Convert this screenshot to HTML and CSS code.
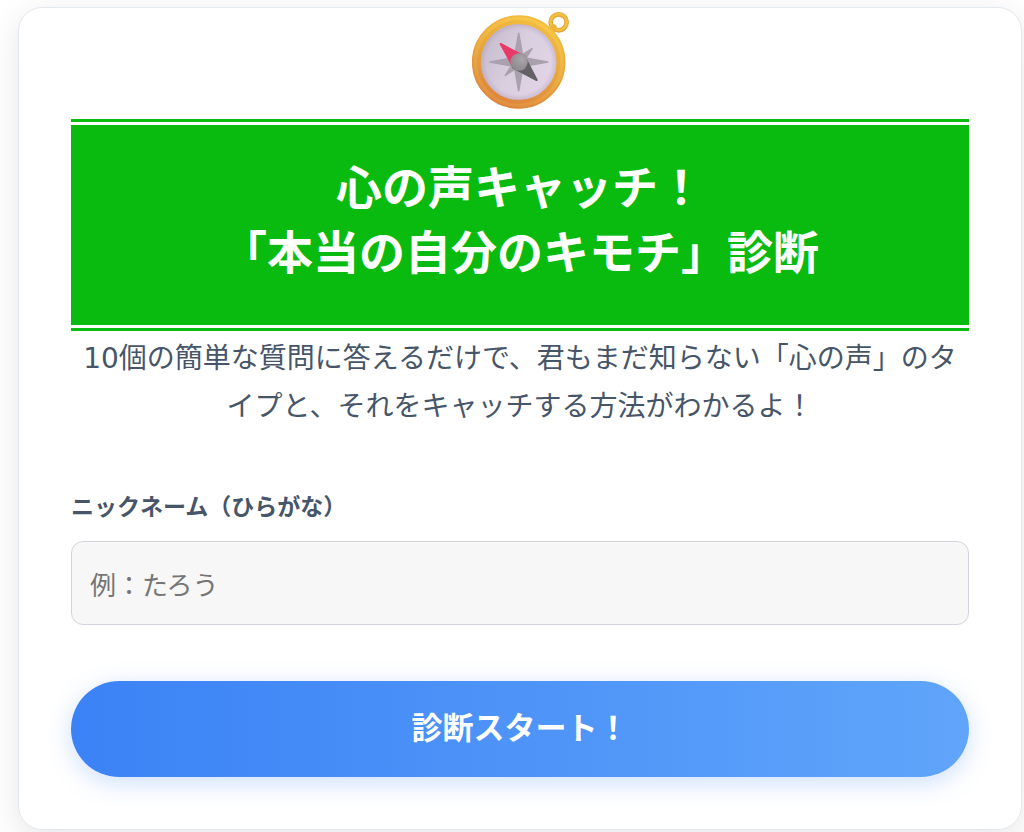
FILE: index.html
```html
<!DOCTYPE html>
<html lang="ja">
<head>
  <meta charset="UTF-8">
  <meta name="viewport" content="width=device-width, initial-scale=1.0">
  <title>心の声キャッチ！「本当の自分のキモチ」診断</title>
  <link rel="stylesheet" href="styles.css">
</head>
<body>
  <main class="card">
    <svg class="compass" viewBox="35 35 291 291" role="img" aria-label="コンパス">
      <defs>
        <linearGradient id="gold" x1="0.7" y1="0" x2="0.3" y2="1">
          <stop offset="0" stop-color="#f3bd3e"/>
          <stop offset="0.5" stop-color="#e6a53c"/>
          <stop offset="1" stop-color="#dc8440"/>
        </linearGradient>
        <linearGradient id="shine" x1="0.7" y1="0" x2="0.3" y2="1">
          <stop offset="0" stop-color="#fbcf4e"/>
          <stop offset="1" stop-color="#e5983e"/>
        </linearGradient>
        <linearGradient id="face" x1="0" y1="0.2" x2="1" y2="0.7">
          <stop offset="0" stop-color="#c3b8ca"/>
          <stop offset="0.5" stop-color="#d9cfdf"/>
          <stop offset="1" stop-color="#e3d5e8"/>
        </linearGradient>
        <radialGradient id="rim">
          <stop offset="0.85" stop-color="#a890ae" stop-opacity="0"/>
          <stop offset="1" stop-color="#a890ae" stop-opacity="0.35"/>
        </radialGradient>
        <radialGradient id="hub" cx="0.65" cy="0.35" r="0.7">
          <stop offset="0" stop-color="#aaa5a9"/>
          <stop offset="1" stop-color="#8d888c"/>
        </radialGradient>
      </defs>
      <circle cx="295" cy="66" r="24" fill="none" stroke="#e3a534" stroke-width="14"/>
      <circle cx="295" cy="65" r="24" fill="none" stroke="#f3bf42" stroke-width="8"/>
      <path d="M268 94L281 80" stroke="#eeb236" stroke-width="16" stroke-linecap="round"/>
      <circle cx="175" cy="185" r="127" fill="url(#face)" stroke="url(#gold)" stroke-width="27"/>
      <circle cx="175" cy="185" r="130" fill="none" stroke="url(#shine)" stroke-width="10" stroke-opacity="0.6"/>
      <circle cx="175" cy="185" r="114" fill="url(#rim)"/>
      <g fill="#aaa1ae" stroke="#aaa1ae" stroke-width="5" stroke-linejoin="round">
        <path d="M215 145L188 187L177 198L135 225L162 183L173 172Z"/>
        <path d="M175 99L188 172L262 185L188 198L175 271L162 198L89 185L162 172Z"/>
      </g>
      <path d="M121 131L192 168L160 202Z" fill="#e83a69" stroke="#e83a69" stroke-width="6" stroke-linejoin="round"/>
      <path d="M229 239L158 202L192 168Z" fill="#646166" stroke="#646166" stroke-width="6" stroke-linejoin="round"/>
      <circle cx="176" cy="185" r="26" fill="url(#hub)"/>
    </svg>

    <h1 class="title">心の声キャッチ！<br>「本当の自分のキモチ」診断</h1>
    <p class="lead">10個の簡単な質問に答えるだけで、君もまだ知らない「心の声」のタイプと、それをキャッチする方法がわかるよ！</p>

    <form class="start-form">
      <label for="nickname">ニックネーム（ひらがな）</label>
      <input type="text" id="nickname" placeholder="例：たろう">
      <button type="button">診断スタート！</button>
    </form>
  </main>
</body>
</html>
```
FILE: styles.css
```css
* {
  box-sizing: border-box;
}
body {
  margin: 0;
  padding: 7px 2px 2px 18px;
  font-family: "DejaVu Sans", "Noto Sans CJK JP", sans-serif;
  background-color: #fff;
  color: #475569;
}
.card {
  padding: 4px 52px 52px;
  background-color: #fff;
  border: 1px solid #e2e8f0;
  border-radius: 24px;
  box-shadow: 0 8px 32px rgba(0, 0, 0, 0.1);
}
.compass {
  display: block;
  width: 97px;
  height: 97px;
  margin: 0 auto 10px;
}
.title {
  margin: 0;
  padding: 24px 0 40px;
  font-family: "Noto Sans CJK JP", sans-serif;
  font-size: 46px;
  font-weight: 700;
  line-height: 65px;
  text-align: center;
  color: #fff;
  background-color: #09bb0f;
  background-clip: padding-box;
  border-top: 9px double #09bb0f;
  border-bottom: 9px double #09bb0f;
}
.lead {
  margin: 0 0 56px;
  padding-top: 4px;
  font-size: 28px;
  line-height: 48px;
  text-align: center;
  word-break: break-all;
}
.start-form {
  display: flex;
  flex-direction: column;
  font-family: "Noto Sans CJK JP", sans-serif;
}
.start-form label {
  margin-bottom: 18px;
  font-size: 23px;
  font-weight: 700;
  line-height: 36px;
}
.start-form input {
  height: 84px;
  margin-bottom: 56px;
  padding: 0 18px;
  font-family: inherit;
  font-size: 26px;
  color: #334155;
  background-color: #f7f7f7;
  border: 1px solid #d1d5db;
  border-radius: 12px;
}
.start-form input::placeholder {
  color: #757575;
}
.start-form button {
  height: 96px;
  padding: 0 0 8px;
  font-family: inherit;
  font-size: 31px;
  font-weight: 700;
  color: #fff;
  background: linear-gradient(to right, #3b82f6, #60a5fa);
  border: none;
  border-radius: 48px;
  box-shadow: 0 6px 24px rgba(59, 130, 246, 0.25);
  cursor: pointer;
}
```
